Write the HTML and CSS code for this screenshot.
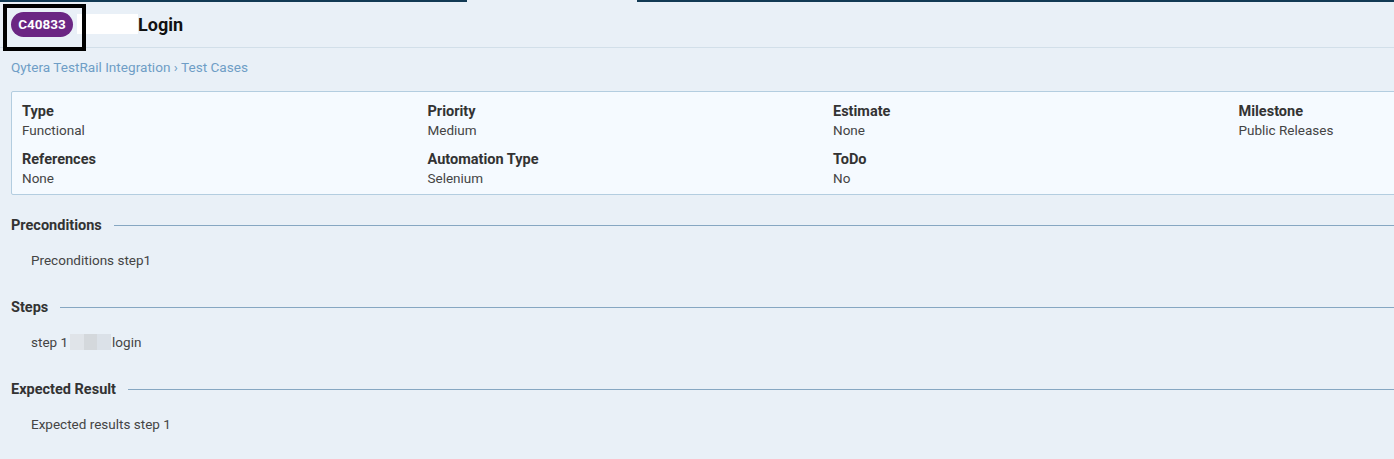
FILE: index.html
```html
<!DOCTYPE html>
<html>
<head>
<meta charset="utf-8">
<link rel="stylesheet" href="styles.css">
</head>
<body>
<div class="page">
  <div class="topbar">
    <div class="tab-line left"></div>
    <div class="tab-gap"></div>
    <div class="tab-line right"></div>
  </div>
  <header class="header">
    <span class="badge">C40833</span>
    <span class="redact"></span>
    <h1 class="title">Login</h1>
    <div class="highlight"></div>
  </header>
  <nav class="crumbs"><a>Qytera TestRail Integration</a> › <a>Test Cases</a></nav>
  <section class="card">
    <div class="field"><div class="label">Type</div><div class="value">Functional</div></div>
    <div class="field"><div class="label">Priority</div><div class="value">Medium</div></div>
    <div class="field"><div class="label">Estimate</div><div class="value">None</div></div>
    <div class="field"><div class="label">Milestone</div><div class="value">Public Releases</div></div>
    <div class="field"><div class="label">References</div><div class="value">None</div></div>
    <div class="field"><div class="label">Automation Type</div><div class="value">Selenium</div></div>
    <div class="field"><div class="label">ToDo</div><div class="value">No</div></div>
  </section>
  <div class="blocks">
    <section class="block">
      <h2 class="block-title"><span>Preconditions</span></h2>
      <p class="block-text">Preconditions step1</p>
    </section>
    <section class="block">
      <h2 class="block-title"><span>Steps</span></h2>
      <p class="block-text">step 1<span class="blur"></span>login</p>
    </section>
    <section class="block">
      <h2 class="block-title"><span>Expected Result</span></h2>
      <p class="block-text">Expected results step 1</p>
    </section>
  </div>
</div>
</body>
</html>
```
FILE: styles.css
```css
html, body {
  margin: 0;
  padding: 0;
  background: #e9f0f7;
  overflow: hidden;
}
body {
  font-family: Roboto, "Liberation Sans", sans-serif;
  color: #333;
}
.page {
  width: 1680px;
}
.topbar {
  display: flex;
  height: 2px;
}
.tab-line {
  background: #123a54;
}
.tab-line.left { width: 467px; }
.tab-gap { width: 170px; }
.tab-line.right { flex: 1; }

.header {
  position: relative;
  display: flex;
  align-items: center;
  height: 45px;
  padding-left: 11px;
  border-bottom: 1px solid #d2dfe9;
}
.badge {
  display: inline-flex;
  align-items: center;
  justify-content: center;
  width: 62px;
  height: 25px;
  border-radius: 13px;
  background: #6b2683;
  color: #fff;
  font-size: 13.5px;
  font-weight: 700;
  margin-top: -1px;
}
.redact {
  width: 61px;
  height: 20px;
  background: #fff;
  margin-left: 4px;
  margin-top: -2px;
}
.title {
  margin: 0;
  font-size: 18px;
  font-weight: 700;
  color: #111;
}
.highlight {
  position: absolute;
  left: 3px;
  top: 2px;
  width: 75px;
  height: 39px;
  border: 4px solid #000;
}

.crumbs {
  padding: 11px 11px 0;
  height: 22px;
  font-size: 13.6px;
  color: #6f9ec6;
}
.crumbs a { color: #6f9ec6; }

.card {
  margin: 10px 0 0 11px;
  width: 1650px;
  height: 104px;
  box-sizing: border-box;
  background: #f5faff;
  border: 1px solid #b3cde0;
  border-radius: 2px;
  padding: 11px 10px 0;
  display: grid;
  grid-template-columns: repeat(4, 405.5px);
  align-content: start;
  row-gap: 12px;
}
.label {
  font-size: 14.5px;
  font-weight: 700;
  color: #333;
  line-height: 18px;
}
.value {
  font-size: 13.5px;
  color: #444;
  line-height: 18px;
}

.blocks {
  padding: 21px 0 0 11px;
}
.block-title {
  display: flex;
  align-items: center;
  margin: 0;
  font-size: 14.5px;
  font-weight: 700;
  color: #333;
  height: 18px;
}
.block-title::after {
  content: "";
  flex: 1;
  height: 1px;
  background: #86a7c2;
  margin-left: 12px;
  margin-top: 1px;
}
.block-text {
  margin: 0;
  padding: 18px 0 0 20px;
  font-size: 13.5px;
  color: #444;
  height: 46px;
  line-height: 16px;
}
.blur {
  display: inline-block;
  width: 41px;
  height: 16px;
  margin: 0 1px 0 2px;
  vertical-align: -3px;
  background: linear-gradient(90deg, #e0e4e9 0 33%, #d4d8dc 33% 66%, #dbe1e8 66%);
}
```
